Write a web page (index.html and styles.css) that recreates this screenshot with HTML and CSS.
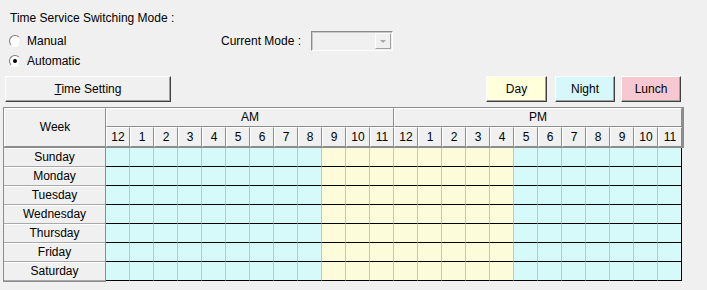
FILE: index.html
```html
<html lang="en">
<head>
    <meta charset="UTF-8">
    <title>Time Service</title>
    <link rel="stylesheet" href="styles.css">
</head>
<body>
<div class="page">
    <div class="mode-title">Time Service Switching Mode :</div>
    <div class="mode-row">
        <label class="radio-item"><span class="radio"></span>Manual</label>
        <span class="current-label">Current Mode :</span>
        <div class="combo"><span class="combo-arrow"></span></div>
    </div>
    <div class="mode-row">
        <label class="radio-item"><span class="radio checked"></span>Automatic</label>
    </div>

    <div class="button-row">
        <button class="win-btn time-btn"><u>T</u>ime Setting</button>
        <div class="legend">
            <button class="win-btn legend-day">Day</button>
            <button class="win-btn legend-night">Night</button>
            <button class="win-btn legend-lunch">Lunch</button>
        </div>
    </div>

    <div class="sched-head">
        <div class="week-head">Week</div>
        <div class="half">
            <div class="half-label">AM</div>
            <div class="hours">
                <span class="hour">12</span><span class="hour">1</span><span class="hour">2</span><span class="hour">3</span>
                <span class="hour">4</span><span class="hour">5</span><span class="hour">6</span><span class="hour">7</span>
                <span class="hour">8</span><span class="hour">9</span><span class="hour">10</span><span class="hour">11</span>
            </div>
        </div>
        <div class="half">
            <div class="half-label">PM</div>
            <div class="hours">
                <span class="hour">12</span><span class="hour">1</span><span class="hour">2</span><span class="hour">3</span>
                <span class="hour">4</span><span class="hour">5</span><span class="hour">6</span><span class="hour">7</span>
                <span class="hour">8</span><span class="hour">9</span><span class="hour">10</span><span class="hour">11</span>
            </div>
        </div>
    </div>
    <div class="sched-body">
        <div class="day-col" id="dayCol"></div>
        <div class="cells" id="cells"></div>
    </div>
</div>

<script>
    var days = ["Sunday", "Monday", "Tuesday", "Wednesday", "Thursday", "Friday", "Saturday"];
    var dayCol = document.getElementById("dayCol");
    var cells = document.getElementById("cells");

    days.forEach(function(day) {
        var label = document.createElement("div");
        label.className = "day";
        label.textContent = day;
        dayCol.appendChild(label);

        // 9 AM to 4 PM is day time, the rest is night
        for (var h = 0; h < 24; h++) {
            var cell = document.createElement("div");
            cell.className = (h >= 9 && h < 17) ? "cell day-time" : "cell night-time";
            cells.appendChild(cell);
        }
    });
</script>
</body>
</html>
```

FILE: styles.css
```css
body {
    margin: 0;
    background-color: #f0f0f0;
    font-family: "Liberation Sans", Arial, sans-serif;
    font-size: 12px;
    color: #000;
}
.page {
    padding-top: 10px;
}
.mode-title {
    padding-left: 10px;
    line-height: 16px;
}
.mode-row {
    display: flex;
    align-items: center;
    height: 20px;
    padding-left: 9px;
}
.mode-title + .mode-row {
    margin-top: 5px;
}
.radio-item {
    display: flex;
    align-items: center;
    width: 212px;
}
.radio {
    position: relative;
    width: 12px;
    height: 12px;
    box-sizing: border-box;
    border-radius: 50%;
    border: 1px solid;
    border-color: #7a7a7a #e8e8e8 #ffffff #7a7a7a;
    background-color: #fff;
    margin-right: 6px;
}
.radio.checked::after {
    content: "";
    position: absolute;
    left: 3px;
    top: 3px;
    width: 4px;
    height: 4px;
    border-radius: 50%;
    background-color: #000;
}
.current-label {
    width: 90px;
}
.combo {
    position: relative;
    width: 82px;
    height: 20px;
    box-sizing: border-box;
    border: 1px solid;
    border-color: #8c8c8c #ffffff #ffffff #8c8c8c;
    box-shadow: inset 1px 1px 0 #c8c8c8;
    background-color: #f0f0f0;
}
.combo-arrow {
    position: absolute;
    right: 1px;
    top: 1px;
    width: 16px;
    height: 16px;
    box-sizing: border-box;
    border: 1px solid;
    border-color: #fdfdfd #a0a0a0 #a0a0a0 #fdfdfd;
}
.combo-arrow::after {
    content: "";
    position: absolute;
    left: 4px;
    top: 6px;
    border-left: 3px solid transparent;
    border-right: 3px solid transparent;
    border-top: 3px solid #a8a8a8;
}
.button-row {
    display: flex;
    margin-top: 5px;
    padding-left: 5px;
}
.win-btn {
    height: 26px;
    box-sizing: border-box;
    padding: 0;
    border: 1px solid;
    border-color: #ffffff #404040 #404040 #ffffff;
    box-shadow: inset -1px -1px 0 #a0a0a0;
    background-color: #f0f0f0;
    font-family: "Liberation Sans", Arial, sans-serif;
    font-size: 12px;
    color: #000;
}
.time-btn {
    width: 166px;
}
.legend {
    display: flex;
    margin-left: 315px;
}
.legend-day {
    width: 61px;
    background-color: #ffffdc;
}
.legend-night {
    width: 60px;
    margin-left: 8px;
    background-color: #d6f8fa;
}
.legend-lunch {
    width: 60px;
    margin-left: 6px;
    background-color: #f8c8d2;
}

/* schedule grid */
.sched-head {
    display: flex;
    width: max-content;
    margin: 5px 0 0 3px;
    border: 1px solid #8c8c8c;
    border-right-width: 2px;
}
.week-head,
.half-label,
.hour {
    box-sizing: border-box;
    border: 1px solid;
    border-color: #ffffff #8c8c8c #8c8c8c #ffffff;
    text-align: center;
}
.week-head {
    width: 102px;
    height: 39px;
    line-height: 36px;
}
.half-label {
    width: 288px;
    height: 19px;
    line-height: 17px;
}
.hours {
    display: flex;
}
.hour {
    width: 24px;
    height: 20px;
    line-height: 18px;
}
.sched-body {
    display: flex;
    margin-left: 3px;
}
.day-col {
    width: 101px;
    border: 1px solid #8c8c8c;
    border-top: none;
}
.day {
    height: 19px;
    box-sizing: border-box;
    border-bottom: 1px solid #a8a8a8;
    border-top: 1px solid #ffffff;
    text-align: center;
    line-height: 17px;
}
.cells {
    display: grid;
    grid-template-columns: repeat(24, 24px);
    grid-auto-rows: 19px;
    align-self: flex-start;
}
.cell {
    box-sizing: border-box;
    border-right: 1px solid #bccaca;
    border-bottom: 1px solid #000;
}
.cell:nth-child(24n) {
    border-right-color: #000;
}
.night-time {
    background-color: #d6fafa;
}
.day-time {
    background-color: #fcfcda;
}
```
